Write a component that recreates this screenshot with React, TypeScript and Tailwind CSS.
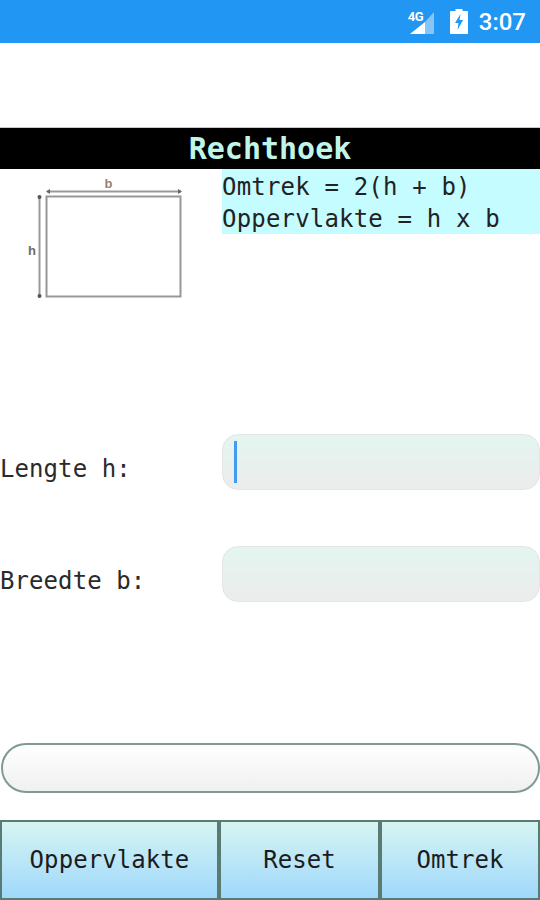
const mono = "font-['DejaVu_Sans_Mono',monospace]";

const StatusBar = () => (
  <div className="h-[43px] bg-[#2196f3] flex items-center justify-end pr-[14px] text-white">
    <div className="relative w-[32px] h-[30px] mr-[13px]">
      <span className="absolute left-[3px] top-[3px] text-[13px] leading-[14px] font-bold font-['Roboto',sans-serif] tracking-[-0.5px]">
        4G
      </span>
      <svg width="32" height="30" viewBox="0 0 32 30" className="absolute left-0 top-0">
        <path d="M5 27 L20 27 L20 15 Z" fill="#fff" />
        <path d="M20 27 L20 15 L29 5 L29 27 Z" fill="#fff" fillOpacity="0.45" />
      </svg>
    </div>
    <svg width="18" height="25" viewBox="0 0 18 25" className="mr-[11px]">
      <path d="M5.5 0 H12.5 V2 H17 A1 1 0 0 1 18 3 V24 A1 1 0 0 1 17 25 H1 A1 1 0 0 1 0 24 V3 A1 1 0 0 1 1 2 H5.5 Z" fill="#fff" />
      <path d="M10.5 5 L5 14 H8.5 L7.5 21 L13 11 H9.5 Z" fill="#2196f3" />
    </svg>
    <span className="text-[24px] leading-none font-medium font-['Roboto',sans-serif]">3:07</span>
  </div>
);

const Diagram = () => (
  <svg width="222" height="132" viewBox="0 0 222 132" className="shrink-0">
    <rect x="46.5" y="27.5" width="134" height="100" fill="#fff" stroke="#979797" strokeWidth="2" />
    <line x1="47" y1="22.5" x2="181" y2="22.5" stroke="#999" strokeWidth="2" />
    <path d="M46 22.5 L50 20 V25 Z M182 22.5 L178 20 V25 Z" fill="#666" />
    <line x1="39.5" y1="28" x2="39.5" y2="128" stroke="#999" strokeWidth="2" />
    <circle cx="39.5" cy="28" r="2" fill="#555" />
    <circle cx="39.5" cy="127" r="2" fill="#555" />
    <text x="108.5" y="19" textAnchor="middle" fontSize="13" fontWeight="bold" fill="#9a8274" fontFamily="'Liberation Sans', sans-serif">b</text>
    <text x="32" y="86" textAnchor="middle" fontSize="13" fontWeight="bold" fill="#6e6a66" fontFamily="'Liberation Sans', sans-serif">h</text>
  </svg>
);

const Field = ({ label, focused = false }: { label: string; focused?: boolean }) => (
  <div className="flex items-center h-[56px]">
    <label className={`w-[222px] shrink-0 text-[24px] leading-none text-[#2a2a2a] tracking-[0.08px] pt-[14px] ${mono}`}>
      {label}
    </label>
    <div className="flex-1 h-full rounded-[16px] border border-[#e2e6e4] bg-gradient-to-b from-[#e4f5f0] to-[#ececec] flex items-center pl-[11px]">
      {focused && <div className="w-[3px] h-[42px] bg-[#3f9cf2]" />}
    </div>
  </div>
);

const ActionButton = ({ label, className }: { label: string; className: string }) => (
  <button
    className={`h-full border-2 border-[#5a7a74] bg-gradient-to-b from-[#d6f5f2] to-[#9fd8fb] text-[24px] leading-none text-[#1c1c1c] tracking-[0.08px] ${mono} ${className}`}
  >
    {label}
  </button>
);

export default function App() {
  return (
    <div className="w-[540px] h-[900px] bg-white flex flex-col overflow-hidden">
      <StatusBar />
      <div className={`mt-[84px] h-[42px] bg-black border-t border-[#c8c8c8] flex items-center justify-center text-[30px] leading-none font-bold text-[#c0f5ea] ${mono}`}>
        Rechthoek
      </div>

      <div className="flex h-[132px]">
        <Diagram />
        <div className={`flex-1 h-[65px] bg-[#c5fcff] text-[24px] leading-[32px] text-[#222] pt-[2px] tracking-[0.18px] ${mono}`}>
          <div>Omtrek = 2(h + b)</div>
          <div>Oppervlakte = h x b</div>
        </div>
      </div>

      <div className="mt-[133px] flex flex-col gap-[56px]">
        <Field label="Lengte h:" focused />
        <Field label="Breedte b:" />
      </div>

      <div className="mt-[141px] ml-[1px] h-[50px] rounded-full border-2 border-[#7f9a94] bg-gradient-to-b from-white to-[#f1f0f0]" />

      <div className="mt-[27px] h-[80px] flex">
        <ActionButton label="Oppervlakte" className="w-[219px]" />
        <ActionButton label="Reset" className="w-[161px]" />
        <ActionButton label="Omtrek" className="flex-1" />
      </div>
    </div>
  );
}
